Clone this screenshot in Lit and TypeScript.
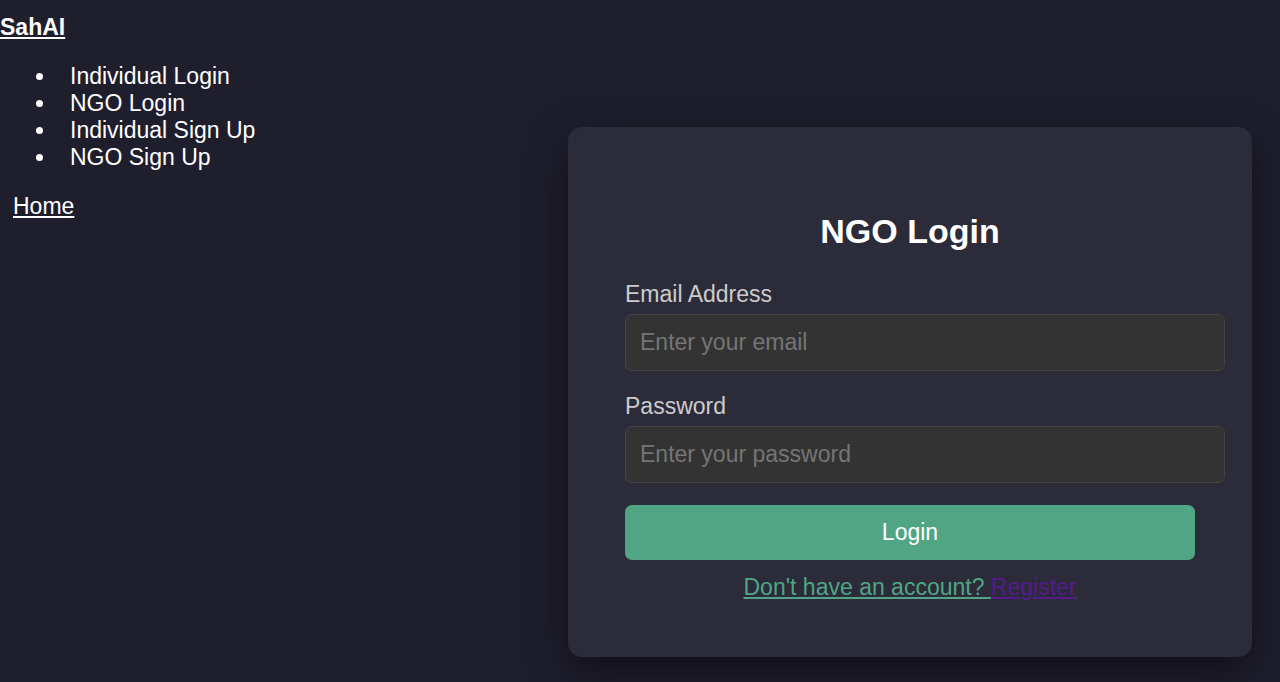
import { LitElement, html, css } from "lit";
import { customElement } from "lit/decorators.js";

@customElement("app-root")
export class AppRoot extends LitElement {
  static styles = css`
    :host {
      display: grid;
      grid-template-columns: minmax(0, 1fr) auto;
      min-height: 100vh;
      box-sizing: border-box;
      padding-right: 28px;
      overflow: hidden;
      background: #1f1e2d;
      color: #fff;
      font-family: "Liberation Sans", Arial, sans-serif;
      font-size: 23px;
      line-height: 27px;
    }
    a {
      color: inherit;
    }
    .side {
      padding-top: 14px;
    }
    .brand {
      font-weight: 700;
    }
    .menu {
      margin: 22px 0;
      padding-left: 57px;
    }
    .menu a {
      padding: 0 13px;
      text-decoration: none;
    }
    .home {
      padding: 0 13px;
    }
    .card {
      align-self: end;
      width: min(570px, 60vw);
      margin-bottom: 25px;
      padding: 57px 57px 56px;
      border-radius: 14px;
      background: #2c2b3a;
      box-shadow: 0 14px 42px rgba(0, 0, 0, 0.5);
    }
    h2 {
      margin: 27px 0 30px;
      font-size: 34px;
      line-height: 40px;
      text-align: center;
    }
    .field {
      margin-bottom: 22px;
    }
    label {
      display: block;
      margin-bottom: 6px;
      color: #ccc;
    }
    input {
      display: block;
      box-sizing: content-box;
      width: 100%;
      height: 27px;
      padding: 14px;
      border: 1px solid #444;
      border-radius: 7px;
      background: #333;
      color: #fff;
      font: inherit;
    }
    input::placeholder {
      color: #757575;
    }
    button {
      display: block;
      width: 100%;
      padding: 14px;
      border: 0;
      border-radius: 7px;
      background: #50a684;
      color: #fff;
      font: inherit;
      cursor: pointer;
    }
    .register {
      margin: 14px 0 0;
      text-align: center;
      color: #50a684;
      text-decoration: underline;
    }
    .register a {
      color: #551a8b;
    }
  `;

  private links = ["Individual Login", "NGO Login", "Individual Sign Up", "NGO Sign Up"];

  render() {
    return html`
      <nav class="side">
        <a class="brand" href="#">SahAI</a>
        <ul class="menu">
          ${this.links.map((name) => html`<li><a href="#">${name}</a></li>`)}
        </ul>
        <a class="home" href="#">Home</a>
      </nav>
      <main class="card">
        <h2>NGO Login</h2>
        <form @submit=${(e: Event) => e.preventDefault()}>
          <div class="field">
            <label for="email">Email Address</label>
            <input id="email" type="email" placeholder="Enter your email" />
          </div>
          <div class="field">
            <label for="password">Password</label>
            <input id="password" type="password" placeholder="Enter your password" />
          </div>
          <button type="submit">Login</button>
        </form>
        <p class="register">Don't have an account? <a href="#">Register</a></p>
      </main>
    `;
  }
}
